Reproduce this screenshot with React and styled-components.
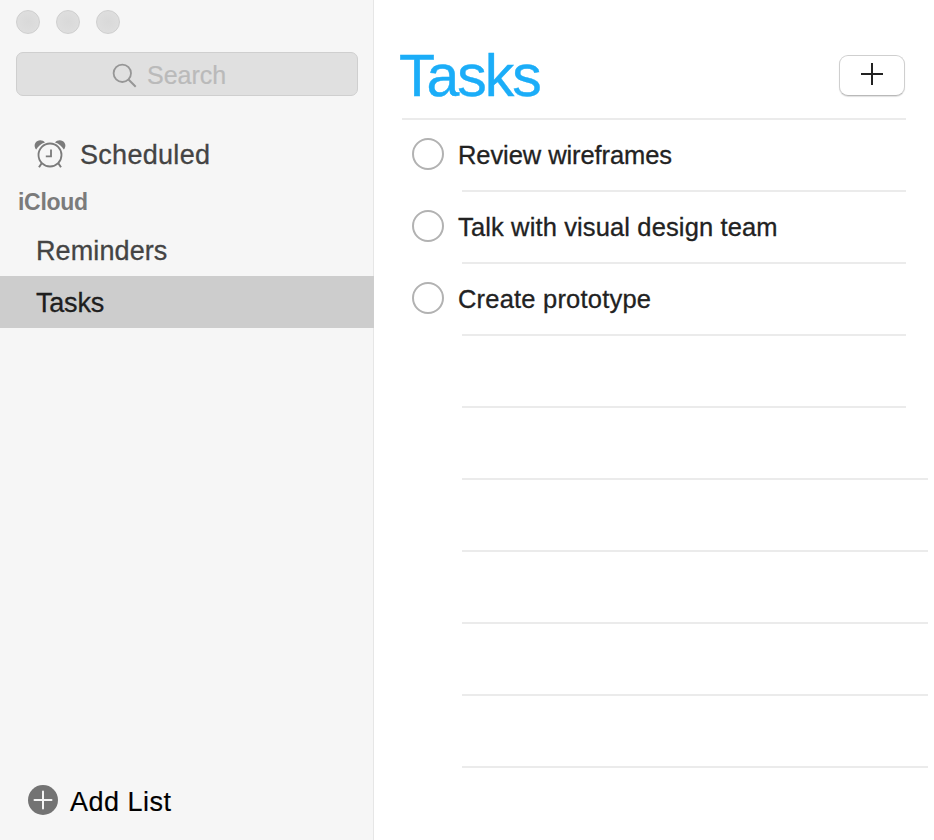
import React from "react";
import styled, { createGlobalStyle } from "styled-components";

const GlobalStyle = createGlobalStyle`
  *, *::before, *::after { box-sizing: border-box; }
  body {
    margin: 0;
    background: #fff;
    font-family: "Liberation Sans", Arial, Helvetica, sans-serif;
  }
`;

const Window = styled.div`
  display: flex;
  width: 934px;
  height: 840px;
  overflow: hidden;
  background: #fff;
`;

const Sidebar = styled.aside`
  display: flex;
  flex-direction: column;
  flex: none;
  width: 374px;
  background: #f6f6f6;
  border-right: 1px solid #e6e6e6;
`;

const WindowControls = styled.div`
  display: flex;
  gap: 16px;
  padding: 10px 16px 0;
  height: 52px;
`;

const ControlDot = styled.span`
  width: 24px;
  height: 24px;
  border: 1px solid #cfcfcf;
  border-radius: 50%;
  background: radial-gradient(circle, #d9d9d9, #dedede 75%);
`;

const SearchField = styled.div`
  display: flex;
  align-items: center;
  flex: none;
  height: 44px;
  width: 342px;
  margin-left: 16px;
  padding-left: 95px;
  border: 1px solid #cfcfcf;
  border-radius: 7px;
  background: #e0e0e0;
  color: #bababa;
  font-size: 25px;
  line-height: 30px;
  -webkit-text-stroke: 0.2px;

  svg { margin: 2px 10px 0 0; }
`;

const ScheduledLink = styled.div`
  display: flex;
  align-items: center;
  height: 32px;
  margin-top: 42px;
  padding-left: 34px;
  gap: 14px;
  color: #444;
  font-size: 27px;
  letter-spacing: 0.3px;
  line-height: 32px;
  -webkit-text-stroke: 0.3px;
`;

const GroupHeading = styled.h2`
  margin: 18px 0 0;
  padding-left: 18px;
  height: 36px;
  color: #7b7b7b;
  font-size: 23px;
  font-weight: 700;
  letter-spacing: -0.3px;
  line-height: 28px;
`;

const ListLink = styled.div`
  flex: none;
  height: 52px;
  margin-right: -1px;
  padding: 1px 0 0 36px;
  background: ${({ $selected }) => ($selected ? "#cdcdcd" : "transparent")};
  color: ${({ $selected }) => ($selected ? "#1e1e1e" : "#444")};
  font-size: 27px;
  letter-spacing: ${({ $tracking }) => $tracking}px;
  line-height: 52px;
  -webkit-text-stroke: 0.3px;
`;

const AddList = styled.div`
  display: flex;
  align-items: center;
  gap: 12px;
  height: 32px;
  margin: auto 0 24px;
  padding-left: 28px;
  color: #000;
  font-size: 27px;
  letter-spacing: 0.5px;
  line-height: 32px;
  -webkit-text-stroke: 0.15px;
`;

const Label = styled.span`
  padding-top: ${({ $drop = 0 }) => $drop}px;
  white-space: nowrap;
`;

const Content = styled.main`
  flex: 1;
  padding: 0 6px 0 26px;
`;

const Header = styled.header`
  display: flex;
  justify-content: space-between;
  height: 118px;
  padding-right: 23px;
`;

const Title = styled.h1`
  margin: 42px 0 0 -1px;
  color: #1badf8;
  font-size: 59px;
  font-weight: 400;
  letter-spacing: -2px;
  line-height: 68px;
  -webkit-text-stroke: 0.4px;
`;

const AddButton = styled.button`
  display: flex;
  align-items: center;
  justify-content: center;
  width: 66px;
  height: 41px;
  margin: 55px 0 0;
  padding: 0 0 3px;
  border: 1px solid #cfcfcf;
  border-bottom-color: #b9b9b9;
  border-radius: 9px;
  background: #fff;
  box-shadow: 0 1px 1px rgba(0, 0, 0, 0.12);
`;

const HeaderRule = styled.div`
  height: 2px;
  margin: 0 22px 0 2px;
  background: #ebebeb;
`;

const TaskRow = styled.div`
  display: grid;
  grid-template-columns: 50px 1fr;
  height: 72px;
  padding: 0 ${({ $wide }) => ($wide ? 0 : 22)}px 0 12px;
`;

const Check = styled.span`
  width: 32px;
  height: 32px;
  margin-top: 18px;
  border: 2px solid #b2b2b2;
  border-radius: 50%;
`;

const TaskText = styled.div`
  grid-column: 2;
  height: 72px;
  border-bottom: 2px solid #ebebeb;
  color: #222;
  font-size: 25.5px;
  letter-spacing: ${({ $tracking = 0 }) => $tracking}px;
  line-height: 71px;
  text-indent: -4px;
  white-space: nowrap;
  -webkit-text-stroke: 0.3px;
`;

const tasks = [
  { text: "Review wireframes", tracking: -0.08 },
  { text: "Talk with visual design team", tracking: 0.13 },
  { text: "Create prototype", tracking: 0.2 },
];
const blankRows = [false, true, true, true, true, true];

const SearchIcon = () => (
  <svg width="25" height="25" viewBox="0 0 25 25" fill="none" stroke="#969696">
    <circle cx="10.3" cy="10.3" r="8.7" strokeWidth="1.8" />
    <path d="M16.5 16.5L23.7 23.7" strokeWidth="2" />
  </svg>
);

const AlarmIcon = () => (
  <svg width="32" height="28" viewBox="0 0 32 28" fill="none" stroke="#7b7b7b">
    <path d="M2.2 9.6C-.4 6.5.3 2.4 3.5.9 6.2-.3 9.3.5 11 2.4 7 3.6 4.2 6 2.2 9.6Z" fill="#7b7b7b" stroke="none" />
    <path d="M29.8 9.6C32.4 6.5 31.7 2.4 28.5.9 25.8-.3 22.7.5 21 2.4 25 3.6 27.8 6 29.8 9.6Z" fill="#7b7b7b" stroke="none" />
    <circle cx="16" cy="15" r="11.5" strokeWidth="1.8" />
    <path d="M17 9.5V16.4H11.8" strokeWidth="1.8" />
    <path d="M7.7 23.3L5 27.2M24.3 23.3L27 27.2" strokeWidth="2" />
  </svg>
);

const AddCircleIcon = () => (
  <svg width="30" height="30" viewBox="0 0 30 30">
    <circle cx="15" cy="15" r="15" fill="#737373" />
    <path d="M15 6.5V23.5M6.5 15H23.5" stroke="#f5f5f5" strokeWidth="2" strokeLinecap="round" />
  </svg>
);

const PlusIcon = () => (
  <svg width="22" height="22" viewBox="0 0 22 22">
    <path d="M11 0V22M0 11H22" stroke="#222" strokeWidth="2" />
  </svg>
);

export default function App() {
  return (
    <>
      <GlobalStyle />
      <Window>
        <Sidebar>
          <WindowControls>
            <ControlDot />
            <ControlDot />
            <ControlDot />
          </WindowControls>
          <SearchField>
            <SearchIcon />
            <Label $drop={2}>Search</Label>
          </SearchField>
          <ScheduledLink>
            <AlarmIcon />
            <Label $drop={2}>Scheduled</Label>
          </ScheduledLink>
          <GroupHeading>iCloud</GroupHeading>
          <ListLink $tracking={0.1}>Reminders</ListLink>
          <ListLink $selected $tracking={-0.2}>Tasks</ListLink>
          <AddList>
            <AddCircleIcon />
            <Label $drop={4}>Add List</Label>
          </AddList>
        </Sidebar>
        <Content>
          <Header>
            <Title>Tasks</Title>
            <AddButton aria-label="Add task">
              <PlusIcon />
            </AddButton>
          </Header>
          <HeaderRule />
          {tasks.map(({ text, tracking }) => (
            <TaskRow key={text}>
              <Check />
              <TaskText $tracking={tracking}>{text}</TaskText>
            </TaskRow>
          ))}
          {blankRows.map((wide, i) => (
            <TaskRow key={i} $wide={wide}>
              <TaskText />
            </TaskRow>
          ))}
        </Content>
      </Window>
    </>
  );
}
